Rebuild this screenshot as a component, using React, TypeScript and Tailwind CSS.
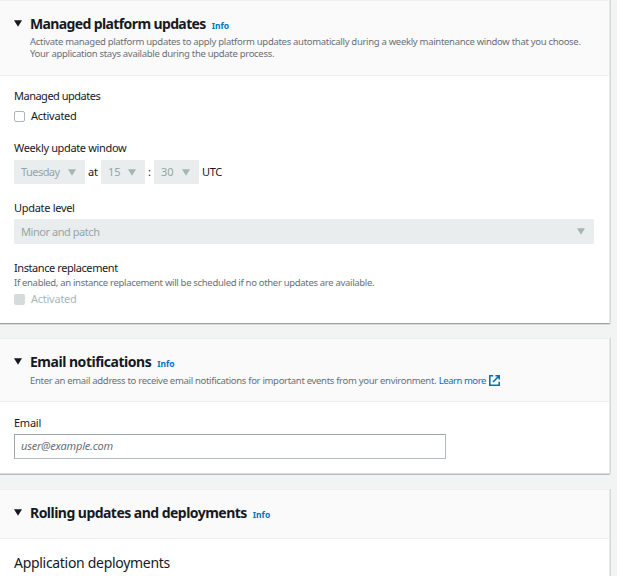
import React from "react";

function Caret({ className }: { className: string }) {
  return (
    <svg viewBox="0 0 8 7" className={`h-[7px] w-2 shrink-0 ${className}`} fill="currentColor">
      <path d="M0 0.2H8L4 6.8Z" />
    </svg>
  );
}

function External() {
  return (
    <svg viewBox="0 0 11 11" className="mb-[2px] ml-[3px] h-[11px] w-[11px] shrink-0" fill="none" stroke="currentColor" strokeWidth="1.6">
      <path d="M4.2 0.8H0.8V10.2H10.2V6.8M6.4 0.8H10.2V4.6M10 1L4 7" />
    </svg>
  );
}

function Header({ title, titleClass, children, className }: { title: string; titleClass: string; children?: React.ReactNode; className: string }) {
  return (
    <header className={`flex border-y bg-[#fafafa] pl-[14px] ${className}`}>
      <Caret className="mt-[19px] text-[#16191f]" />
      <div className="ml-2 pt-[13px]">
        <div className="flex items-baseline">
          <h2 className={`text-[14px] leading-5 font-bold text-[#16191f] ${titleClass}`}>{title}</h2>
          <a className="ml-[6px] text-[8.5px] leading-5 font-bold text-[#0073bb]">Info</a>
        </div>
        {children}
      </div>
    </header>
  );
}

function Select({ value, className }: { value: string; className: string }) {
  return (
    <div className={`flex h-6 items-center justify-between rounded-[1px] bg-[#e9eded] pl-[7px] pr-[9px] text-[#95a5a6] ${className}`}>
      <span>{value}</span>
      <Caret className="text-[#a5b4b5]" />
    </div>
  );
}

export default function App() {
  return (
    <div className="h-[584px] overflow-hidden bg-white font-['Noto_Sans','Open_Sans',sans-serif] text-[11px] whitespace-nowrap text-[#16191f]">
      <main className="flex h-[576px] flex-col overflow-hidden bg-[#f2f3f3]">
        <section className="h-[324px] w-[610px] shrink-0 border-r border-b border-r-[#e4e8e8] border-b-[#98a5a7] bg-white shadow-[1px_0_0_#d5dbdb,0_1px_0_#d5dbdb]">
          <Header title="Managed platform updates" titleClass="tracking-[-0.62px]" className="h-[76px] border-[#eff0f0]">
            <p className="text-[9.5px] leading-[12px] tracking-[-0.305px] text-[#687078]">
              Activate managed platform updates to apply platform updates automatically during a weekly maintenance window that you choose.
              <br />
              Your application stays available during the update process.
            </p>
          </Header>
          <div className="px-[14px] pt-3 leading-4">
            <div className="tracking-[-0.5px]">Managed updates</div>
            <div className="mt-1 flex h-4 items-center">
              <span className="h-[11px] w-[11px] rounded-[2px] border border-[#aab7b8]" />
              <span className="ml-[6px] tracking-[-0.25px]">Activated</span>
            </div>
            <div className="mt-4 tracking-[-0.35px]">Weekly update window</div>
            <div className="mt-1 flex h-6 items-center">
              <Select value="Tuesday" className="w-[71px] tracking-[-0.55px]" />
              <span className="w-4 text-center">at</span>
              <Select value="15" className="w-11" />
              <span className="w-[9px] text-center">:</span>
              <Select value="30" className="w-[45px]" />
              <span className="ml-[3px] tracking-[-0.3px]">UTC</span>
            </div>
            <div className="mt-4 tracking-[-0.3px]">Update level</div>
            <Select value="Minor and patch" className="mt-[3px] h-[25px] w-[580px] tracking-[-0.45px]" />
            <div className="mt-4 tracking-[-0.42px]">Instance replacement</div>
            <div className="text-[9.5px] leading-[14px] tracking-[-0.315px] text-[#687078]">If enabled, an instance replacement will be scheduled if no other updates are available.</div>
            <div className="mt-px flex h-4 items-center text-[#aab7b8]">
              <span className="h-[11px] w-[11px] rounded-[2px] bg-[#d5dbdb]" />
              <span className="ml-[6px] tracking-[-0.25px]">Activated</span>
            </div>
          </div>
        </section>
        <section className="mt-[14px] h-[136px] w-[610px] shrink-0 border-r border-b border-r-[#e4e8e8] border-b-[#d5dbdb] bg-white shadow-[1px_0_0_#d5dbdb,0_1px_0_#b8bfc1]">
          <Header title="Email notifications" titleClass="tracking-[-0.48px]" className="h-16 border-[#eaeded]">
            <p className="flex text-[9.5px] leading-[14px] tracking-[-0.31px] text-[#687078]">
              Enter an email address to receive email notifications for important events from your environment.
              <a className="ml-[2.5px] flex items-center tracking-[-0.46px] text-[#0073bb]">Learn more<External /></a>
            </p>
          </Header>
          <div className="px-[14px] pt-[13px] leading-4">
            <div className="tracking-[-0.25px]">Email</div>
            <div className="mt-[3px] flex h-[25px] w-[432px] items-center border border-[#9ba5aa] border-r-[#b3babd] border-b-[#b3babd] pb-px pl-[6px] tracking-[-0.22px] text-[#687078] italic">user@example.com</div>
          </div>
        </section>
        <section className="mt-[15px] h-[100px] w-[610px] shrink-0 border-r border-r-[#e4e8e8] bg-white shadow-[1px_0_0_#d5dbdb]">
          <Header title="Rolling updates and deployments" titleClass="tracking-[-0.53px]" className="h-[50px] border-[#eff0f0]" />
          <h3 className="pt-[14px] pl-[14px] text-[14px] leading-5 tracking-[-0.3px]">Application deployments</h3>
        </section>
      </main>
    </div>
  );
}
